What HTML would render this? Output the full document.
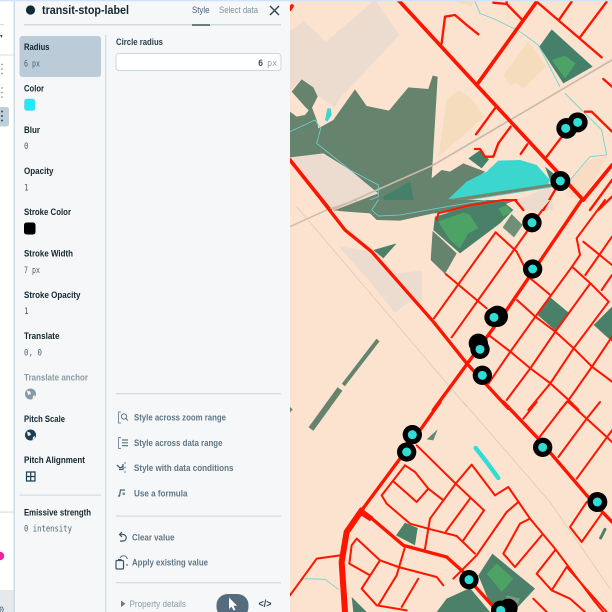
<!DOCTYPE html>
<html><head><meta charset="utf-8"><style>
html,body{margin:0;padding:0;width:612px;height:612px;overflow:hidden;background:#fce3cf}
svg{display:block;filter:blur(.3px)}
.l{font:bold 9.5px "Liberation Sans",sans-serif;fill:#14262e}
.m{font:8.5px "DejaVu Sans Mono","Liberation Mono",monospace;fill:#4a6474}
.a{font:bold 9.5px "Liberation Sans",sans-serif;fill:#5f7686}
</style></head><body>
<svg width="612" height="612" viewBox="0 0 612 612" xmlns="http://www.w3.org/2000/svg">
<rect x="290" width="322" height="612" fill="#fce3cf"/>
<!-- MAP A -->
<g transform="translate(290,0) scale(.33333)" fill="none" stroke-linecap="round" stroke-linejoin="round">
<path fill="#ecdccf" d="M0 95L40 62L108 125L255 0L328 105L150 295L135 322L80 285L35 238L0 270Z"/>
<path fill="#ecdccf" d="M0 470L90 460L180 510L265 580L130 630L90 600L0 490Z"/>
<path fill="#ecdccf" d="M680 600L780 560L790 630H700Z"/>
<path fill="#f5dcbc" d="M470 300L505 270L540 292L585 350L445 470Z"/>
<path fill="#f5dcbc" d="M640 225L715 125L770 200L700 265L680 250L660 255Z"/>
<path fill="#f5dcbc" d="M480 0H550L545 20Z"/>
<path fill="#f9dcc2" d="M840 540L900 480L950 470L880 600L830 590Z"/>
<path fill="#65836d" d="M130 360L195 268L230 318L297 332L355 262L415 267L428 227L443 230L425 535L455 510L480 515L520 490L585 515L480 600L440 632H130L265 580L180 510L100 460L0 472V335L20 350L45 345L65 320L80 360L85 385Z"/>
<path fill="#65836d" d="M5 275L35 238L70 262L83 290L60 335L45 320Z"/>
<path fill="#3bd6ce" d="M475 597L530 545L590 515L625 482L690 480L740 495L780 540L775 555L600 580Z"/>
<path fill="#3bd6ce" d="M105 360L112 325L122 325L125 345L112 365Z"/>
<path stroke="#6f8a70" stroke-width="11" d="M470 604L780 557"/>
<path stroke="#c9baa9" stroke-width="5" d="M130 628L430 495L720 325L966 180"/>
<path fill="#45806a" d="M785 88L908 200L820 250L748 140Z"/>
<path fill="#4ca365" d="M785 180L825 167L857 190L825 235Z"/>
<path fill="#45806a" d="M535 475L568 452L597 478L575 505Z"/>
<path fill="#45806a" d="M280 590L360 545L372 605L285 630Z"/>
<path fill="#45806a" d="M765 500L790 520L780 540Z"/>
<g stroke="#6fcfd0" stroke-width="2.5">
<path d="M555 5L570 40L620 60L690 95L745 135L810 260"/>
<path d="M825 280L880 335L935 390L950 465L900 470L840 540"/>
<path d="M0 395L75 360L92 385L80 430L180 510L265 555L265 590L240 600"/>
<path d="M350 630L470 610L780 562"/>
</g>
<g stroke="#fe1500" stroke-width="7">
<path d="M845 5L808 58M950 5L870 112"/>
<path d="M610 8L650 12L695 58M650 0V12"/>
<path d="M455 130L465 50L495 45L530 75L565 103"/>
<path d="M615 325L558 403"/>
<path d="M662 380L625 430L610 470L585 470L570 447L555 447"/>
<path d="M712 433L692 462M827 395L770 470M810 545L760 630"/>
<path d="M885 335H905L966 395M940 237L966 260"/>
<path d="M900 630L966 540M925 630L966 590"/>
<path d="M740 5L935 172"/>
<path d="M440 630L570 610L675 600L700 630"/>
</g>
<g stroke="#fe1500" stroke-width="11">
<path d="M325 0L560 255L880 600"/>
<path d="M740 5L560 255"/>
<path d="M966 495L880 600"/>
<path d="M0 480L120 630"/>
<path d="M0 28L6 18"/>
</g>
<g><circle cx="863" cy="367" r="30" fill="#000"/><circle cx="830" cy="385" r="31" fill="#000"/><circle cx="863" cy="367" r="13.500" fill="#2fdcd6"/><circle cx="827" cy="385" r="13.500" fill="#2fdcd6"/><circle cx="811" cy="543" r="30" fill="#000"/><circle cx="811" cy="543" r="13.500" fill="#2fdcd6"/></g>
</g>
<!-- MAP B -->
<g transform="translate(290,200) scale(.33333)" fill="none" stroke-linecap="round" stroke-linejoin="round">
<path fill="#65836d" d="M145 33L215 0H680L600 30L430 40L330 62L260 60L240 40Z"/>
<path stroke="#c9baa9" stroke-width="4" d="M0 80L110 30L200 0"/>
<path stroke="#d5c6b6" stroke-width="2" d="M20 20L530 620"/>
<path stroke="#6fcfd0" stroke-width="2.500" d="M265 0L245 30L265 48L330 45L470 20L590 0"/>
<path fill="#ecdccf" d="M680 0H780L745 40L720 30Z"/>
<path fill="#ecdccf" d="M145 138L240 155L320 220L395 212L395 305L358 305L315 338L235 240Z"/>
<path fill="#65836d" d="M428 92L500 160L465 222L422 180Z"/>
<path fill="#4b8068" d="M435 50L520 25L640 5L670 30L630 70L510 160L430 90Z"/>
<path stroke="#f6e7da" stroke-width="2" d="M428 92L505 158"/>
<path fill="#4ca365" d="M445 65L520 38L540 45L565 85L535 100L510 145L480 120Z"/>
<path fill="#4ca365" d="M625 25L650 15L665 35L640 50Z"/>
<path fill="#6f8f79" d="M665 42L698 75L672 112L638 82Z"/>
<path fill="#4b8068" d="M781 292L836 338L796 392L743 345Z"/>
<path fill="#4b8068" d="M966 320V425L911 375Z"/>
<path fill="#4b8068" d="M250 150L320 130L280 175Z"/>
<g stroke-linecap="butt" stroke="#65836d">
<path stroke-width="12" d="M264 420L160 555"/>
</g>
<path fill="#f9dcc2" d="M830 90L880 0H860L820 70Z"/>
<g stroke="#fe1500" stroke-width="6">
<path d="M757 30L485 412"/>
<path d="M617 97L432 355"/>
<path d="M617 97L680 155L721 235L781 285"/>
<path d="M467 222L590 325"/>
<path d="M945 0L860 115L870 165L846 200L736 350L661 455L596 550"/>
<path d="M846 200L901 250L956 305L851 445L781 550L715 630"/>
<path d="M901 250L796 395L721 505L650 600"/>
<path d="M906 500L836 600L810 630"/>
<path d="M681 300L736 350L796 395L851 445L906 500L966 545"/>
<path d="M596 405L661 455L721 505L781 550L836 600L866 630"/>
<path d="M966 110L886 225M966 225L935 270M880 125L966 195"/>
<path d="M906 500L966 410"/>
<path d="M440 60L445 40L530 18L640 0H680"/>
</g>
<g stroke="#fe1500" stroke-width="10">
<path d="M95 0L165 90L245 155L430 365L530 490L655 625"/>
<path d="M875 0L650 330L540 480L430 630"/>
</g>
<g fill="#000"><circle cx="726" cy="68" r="29"/><circle cx="728" cy="207" r="29"/><circle cx="622" cy="349" r="32"/><circle cx="612" cy="352" r="29"/><circle cx="565" cy="430" r="29"/><circle cx="570" cy="448" r="29"/><circle cx="577" cy="526" r="29"/></g>
<g fill="#2fdcd6"><circle cx="726" cy="68" r="13.500"/><circle cx="728" cy="207" r="13.500"/><circle cx="612" cy="352" r="13.500"/><circle cx="570" cy="448" r="13.500"/><circle cx="577" cy="526" r="13.500"/></g>
</g>
<!-- Strip 2 -->
<path d="M340 389L311 429" stroke="#65836d" stroke-width="6" fill="none"/>
<!-- MAP C -->
<g transform="translate(290,402) scale(.33333)" fill="none" stroke-linecap="round" stroke-linejoin="round">
<path fill="#65836d" d="M0 15L8 22L0 32Z"/>
<path stroke="#d5c6b6" stroke-width="2" d="M520 0L780 300L960 560"/>
<path fill="#4c8068" d="M345 362L383 378L375 430L318 400Z"/>
<path fill="#4c8068" d="M607 455L735 560L670 630H610L565 520Z"/>
<path fill="#4c8068" d="M540 558L600 630H440L470 590Z"/>
<path fill="#4ca365" d="M620 485L670 530L635 570L590 515Z"/>
<path fill="#7b9a85" d="M650 580L690 590L670 630H640Z"/>
<path fill="#5f8a7a" d="M410 112L443 82L430 115Z"/>
<path fill="#4c8068" d="M185 585L230 630H190Z"/>
<path stroke="#2fdcd6" stroke-width="13" d="M557 138L590 180L625 228"/>
<path stroke="#4c8068" stroke-width="9" d="M945 382L932 408"/>
<path stroke="#6fcfd0" stroke-width="2.500" d="M0 575L40 530L105 532L145 562"/>
<g stroke="#fe1500" stroke-width="6">
<path d="M740 0L700 50M830 0L745 110M835 0L945 100L966 120M930 0L890 50L805 165M966 85L860 230"/>
<path d="M380 130L497 245L582 325"/>
<path d="M497 245L545 188L615 280"/>
<path d="M497 245L420 350L405 440"/>
<path d="M345 190L275 280L290 305L360 365L415 380L500 402L555 455"/>
<path d="M345 190L375 210L415 260L380 300L310 238"/>
<path d="M415 260L460 295"/>
<path d="M540 290L468 388"/>
<path d="M615 280L655 255L720 350L795 440L915 600L940 630"/>
<path d="M582 325L520 415"/>
<path d="M685 300L650 330L560 460L490 530"/>
<path d="M720 350L690 365L640 455L675 495L755 400"/>
<path d="M795 445L740 515L785 565L830 495"/>
<path d="M785 565L840 590L885 630"/>
<path d="M830 495L950 630"/>
<path d="M200 410L185 430L178 485L240 520"/>
<path d="M200 410L270 475L325 495L440 525L460 550"/>
<path d="M270 475L215 560L260 610L350 625"/>
<path d="M345 435L320 520L265 610"/>
<path d="M385 530L335 615"/>
<path d="M150 460L80 470L0 580"/>
<path d="M890 300L840 375L875 420L935 335"/>
<path d="M730 590L770 630"/>
</g>
<g stroke="#fe1500" stroke-width="10">
<path d="M640 0L745 110L890 280L966 360"/>
<path d="M450 0L390 85"/>
<path d="M330 170L215 325L240 345L340 430L470 465L520 510"/>
<path d="M537 533L620 625"/>
</g>
<path stroke="#fe1500" stroke-width="18" d="M215 325L170 390L155 480L165 630"/>
<path fill="#fe1500" d="M215 320L250 345L240 358L205 335Z"/>
<g fill="#000"><circle cx="367" cy="98" r="29"/><circle cx="350" cy="150" r="29"/><circle cx="758" cy="136" r="29"/><circle cx="922" cy="300" r="30"/><circle cx="537" cy="533" r="29"/><circle cx="655" cy="618" r="28"/><circle cx="632" cy="625" r="29"/></g>
<g fill="#2fdcd6"><circle cx="367" cy="98" r="13.500"/><circle cx="350" cy="150" r="13.500"/><circle cx="758" cy="136" r="13.500"/><circle cx="922" cy="300" r="13.500"/><circle cx="537" cy="533" r="13.500"/><circle cx="632" cy="625" r="13.500"/></g>
</g>

<!-- LEFT STRIP -->
<rect width="14" height="612" fill="#fff"/>
<rect y="54.500" width="14" height="1" fill="#d5dfe6"/>
<rect y="24" width="4" height="1" fill="#d5dfe6"/>
<rect y="511.500" width="14" height="1.200" fill="#d5dfe6"/>
<rect y="590" width="14" height="22" fill="#e5e9ec"/>
<path d="M0 35h2.500l-1 3z" fill="#2c4654"/>
<rect x="-3" y="107" width="12" height="19.500" rx="2.500" fill="#c0ced9"/>
<g fill="#8c9fab"><circle cx="2" cy="64.500" r=".9"/><circle cx="2" cy="69" r=".9"/><circle cx="2" cy="73.500" r=".9"/><circle cx="2" cy="88" r=".9"/><circle cx="2" cy="92.500" r=".9"/><circle cx="2" cy="97" r=".9"/></g>
<g fill="#344f5f"><circle cx="2" cy="111.500" r="1"/><circle cx="2" cy="116" r="1"/><circle cx="2" cy="120.500" r="1"/></g>
<circle cx="0" cy="556" r="4.200" fill="#f020a0"/>
<text x="-1" y="613" class="m">0</text>

<!-- PANEL -->
<rect x="14" width="276" height="612" fill="#f5f7f8"/>
<rect x="13.500" width="1.500" height="612" fill="#d0dce4"/>
<rect width="612" height="1.300" fill="#cfe4fb"/>
<circle cx="30.500" cy="10" r="4.600" fill="#0f2b36"/>
<text x="42" y="14" textLength="87" lengthAdjust="spacingAndGlyphs" style="font:bold 11.500px 'Liberation Sans',sans-serif;fill:#14262e">transit-stop-label</text>
<text x="192" y="13" textLength="17.500" lengthAdjust="spacingAndGlyphs" class="a" style="font-weight:normal;fill:#4a6070">Style</text>
<text x="219" y="13" textLength="39" lengthAdjust="spacingAndGlyphs" class="a" style="font-weight:normal;fill:#7d909c">Select data</text>
<path d="M270 6l9 9M279 6l-9 9" stroke="#2c4654" stroke-width="1.400" fill="none"/>
<rect x="24" y="24" width="257" height="1.500" fill="#d0dce4"/>
<rect x="192" y="24" width="18" height="2" fill="#6b7d80"/>
<rect x="19.500" y="36" width="81.500" height="41" rx="3" fill="#bccbd8"/>
<rect x="105" y="35" width="1.400" height="577" fill="#d3dfe7"/>

<text class="l" x="24" y="50" textLength="25.500" lengthAdjust="spacingAndGlyphs">Radius</text>
<text class="m" x="24" y="66.500" textLength="16" lengthAdjust="spacingAndGlyphs">6 px</text>
<text class="l" x="24" y="91.500" textLength="20" lengthAdjust="spacingAndGlyphs">Color</text>
<rect x="24.500" y="99" width="10.500" height="11.500" rx="2.500" fill="#20eaff" stroke="#7bc5d2" stroke-width=".6"/>
<text class="l" x="24" y="133" textLength="16" lengthAdjust="spacingAndGlyphs">Blur</text>
<text class="m" x="24" y="149" textLength="4.500" lengthAdjust="spacingAndGlyphs">0</text>
<text class="l" x="24" y="174" textLength="29.500" lengthAdjust="spacingAndGlyphs">Opacity</text>
<text class="m" x="24" y="190.500" textLength="4.500" lengthAdjust="spacingAndGlyphs">1</text>
<text class="l" x="24" y="215" textLength="47" lengthAdjust="spacingAndGlyphs">Stroke Color</text>
<rect x="24" y="222.500" width="11.500" height="12" rx="2.500" fill="#000"/>
<text class="l" x="24" y="256.500" textLength="49" lengthAdjust="spacingAndGlyphs">Stroke Width</text>
<text class="m" x="24" y="273" textLength="16" lengthAdjust="spacingAndGlyphs">7 px</text>
<text class="l" x="24" y="298" textLength="56.500" lengthAdjust="spacingAndGlyphs">Stroke Opacity</text>
<text class="m" x="24" y="314" textLength="4.500" lengthAdjust="spacingAndGlyphs">1</text>
<text class="l" x="24" y="339" textLength="35.500" lengthAdjust="spacingAndGlyphs">Translate</text>
<text class="m" x="24" y="355.500" textLength="18" lengthAdjust="spacingAndGlyphs">0, 0</text>
<text class="l" x="24" y="380.500" textLength="64" lengthAdjust="spacingAndGlyphs" style="fill:#8a9aa4">Translate anchor</text>
<circle cx="30.500" cy="394" r="5.500" fill="#8a9aa4"/><path d="M27 390.500l3 1 1 2.500-3 1zM33 396l2-1-.5 3-2 1.500z" fill="#f5f7f8"/>
<text class="l" x="24" y="422" textLength="41" lengthAdjust="spacingAndGlyphs">Pitch Scale</text>
<circle cx="30.500" cy="435" r="5.500" fill="#1d3f55"/><path d="M27 431.500l3 1 1 2.500-3 1zM33 437l2-1-.5 3-2 1.500z" fill="#f5f7f8"/>
<text class="l" x="24" y="463" textLength="61" lengthAdjust="spacingAndGlyphs">Pitch Alignment</text>
<path d="M26.500 472h8.500v9h-8.500zM30.700 472v9M26.500 476.500h8.500" fill="none" stroke="#1d3f55" stroke-width="1.200"/>
<rect x="19.500" y="494.500" width="81.500" height="1.300" fill="#d3dfe7"/>
<text class="l" x="24" y="515.500" textLength="67" lengthAdjust="spacingAndGlyphs">Emissive strength</text>
<text class="m" x="24" y="531.500" textLength="48" lengthAdjust="spacingAndGlyphs">0 intensity</text>

<text class="l" x="116" y="45" textLength="47" lengthAdjust="spacingAndGlyphs" style="fill:#2a3f4b">Circle radius</text>
<rect x="116" y="53.500" width="165" height="17" rx="3" fill="#fff" stroke="#c5d8e8" stroke-width="1"/>
<text x="258" y="66" style="font:bold 8.500px 'DejaVu Sans Mono',monospace;fill:#3c5566">6</text>
<text x="267" y="66" class="m" style="fill:#8fa1ad">px</text>

<rect x="116" y="393" width="165" height="1.300" fill="#d3dfe7"/>
<g fill="none" stroke="#7a909f" stroke-width="1">
<path d="M121 412h-2.500v11h2.500"/><circle cx="124" cy="416.500" r="2.600" stroke="#5f7686"/><path d="M126 418.500l2 2" stroke="#5f7686"/>
<path d="M121 437.500h-2.500v11h2.500"/><path d="M122 440h6M122 442.800h6M122 445.600h6" stroke="#5f7686" stroke-width="1.200"/>
</g>
<path d="M117 465l3 3 3-1.500M123 464v5.500h-4" fill="none" stroke="#4d6576" stroke-width="1.300"/>
<g fill="#8094a2"><circle cx="125" cy="463" r=".9"/><circle cx="125" cy="467.500" r=".9"/><circle cx="125" cy="472" r=".9"/></g>
<path d="M118 496h1.500l1-6h4.500" fill="none" stroke="#4d6576" stroke-width="1.300"/><rect x="122.500" y="492.500" width="2.500" height="2.500" fill="#8094a2"/>
<text class="a" x="134" y="420.500" textLength="92" lengthAdjust="spacingAndGlyphs">Style across zoom range</text>
<text class="a" x="134" y="446" textLength="88.500" lengthAdjust="spacingAndGlyphs">Style across data range</text>
<text class="a" x="134" y="471" textLength="99.500" lengthAdjust="spacingAndGlyphs">Style with data conditions</text>
<text class="a" x="134" y="496.500" textLength="53.500" lengthAdjust="spacingAndGlyphs">Use a formula</text>
<rect x="116" y="515.500" width="165" height="1.300" fill="#d3dfe7"/>
<path d="M122 532l-2.500 2.500 2.500 2.500M120 534.500h3.500a3.300 3.300 0 0 1 0 6.500h-3.500" fill="none" stroke="#3d5566" stroke-width="1.200"/>
<text class="a" x="132" y="540.500" textLength="42.500" lengthAdjust="spacingAndGlyphs">Clear value</text>
<rect x="116" y="560.500" width="7.500" height="8.500" rx="1" fill="none" stroke="#3d5566" stroke-width="1.200"/><rect x="118" y="559" width="3.500" height="2" fill="#3d5566"/>
<path d="M120 558a4 4 0 0 1 6-1.500l1.500 2.500" fill="none" stroke="#5f7686" stroke-width="1"/><circle cx="127" cy="565" r="1" fill="#7a909f"/>
<text class="a" x="132" y="565.500" textLength="76" lengthAdjust="spacingAndGlyphs">Apply existing value</text>
<rect x="116" y="582" width="165" height="1.300" fill="#d3dfe7"/>
<path d="M121 600.500l4.500 3.300-4.500 3.300z" fill="#677d8c"/>
<text class="a" x="129.500" y="607" textLength="56.500" lengthAdjust="spacingAndGlyphs" style="font-weight:normal;fill:#8a9ba7">Property details</text>
<rect x="216.500" y="594" width="32" height="24" rx="11" fill="#546c7d"/>
<path d="M229 597.500v11.500l2.600-2.400 2 4 1.800-1-2-3.800h3.600z" fill="#fff"/>
<text x="258.500" y="607" textLength="13" lengthAdjust="spacingAndGlyphs" style="font:bold 10px 'Liberation Sans',sans-serif;fill:#2c4654">&lt;/&gt;</text>
</svg>
</body></html>
